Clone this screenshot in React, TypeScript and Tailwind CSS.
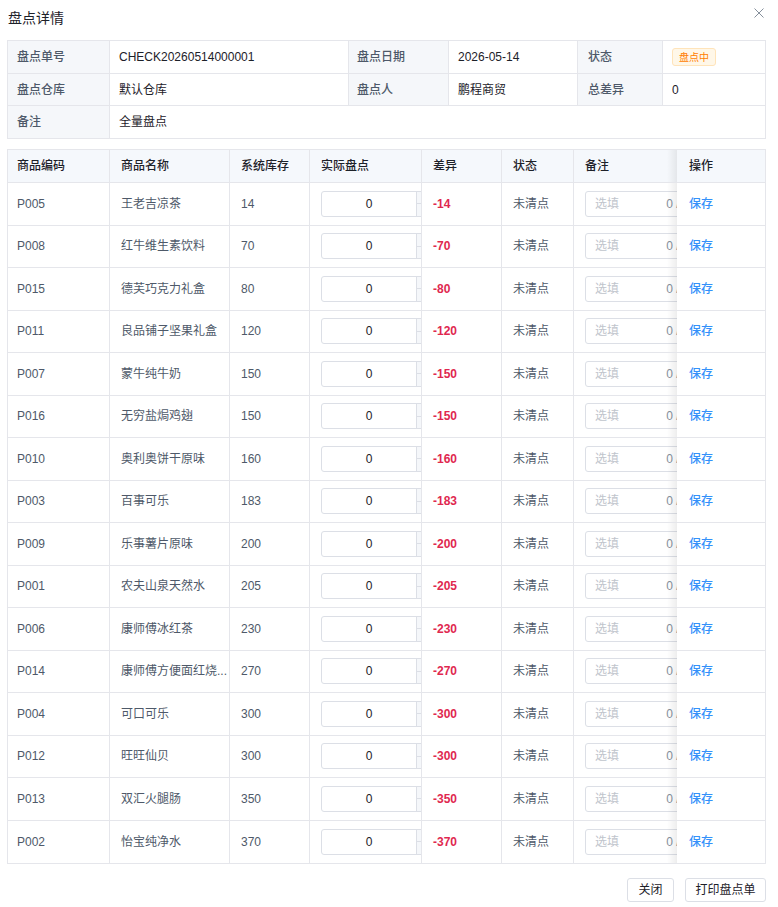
import React from "react";

const rows: [string, string, number][] = [
  ["P005", "王老吉凉茶", 14],
  ["P008", "红牛维生素饮料", 70],
  ["P015", "德芙巧克力礼盒", 80],
  ["P011", "良品铺子坚果礼盒", 120],
  ["P007", "蒙牛纯牛奶", 150],
  ["P016", "无穷盐焗鸡翅", 150],
  ["P010", "奥利奥饼干原味", 160],
  ["P003", "百事可乐", 183],
  ["P009", "乐事薯片原味", 200],
  ["P001", "农夫山泉天然水", 205],
  ["P006", "康师傅冰红茶", 230],
  ["P014", "康师傅方便面红烧...", 270],
  ["P004", "可口可乐", 300],
  ["P012", "旺旺仙贝", 300],
  ["P013", "双汇火腿肠", 350],
  ["P002", "怡宝纯净水", 370],
];

const grid =
  "grid grid-cols-[102px_120px_80px_112px_80px_72px_103px_88px]";

function ActionCell({ children, header }: { children: React.ReactNode; header?: boolean }) {
  return (
    <div
      className={`relative z-10 flex items-center pl-[12px] ${header ? "bg-[#f5f8fc] font-medium text-[#1d2129]" : "bg-white"}`}
    >
      <div className="pointer-events-none absolute left-[-10px] top-0 h-full w-[10px] bg-gradient-to-r from-transparent to-[rgba(0,0,0,0.07)]" />
      {children}
    </div>
  );
}

export default function App() {
  return (
    <div
      className="w-[778px] min-h-[907px] bg-white text-[12px] text-[#4e5969]"
      style={{ fontFamily: '"Liberation Sans", "Noto Sans CJK SC", sans-serif' }}
    >
      <div className="relative flex h-[36px] items-center pl-[8px] text-[14px] text-[#1d2129]">
        盘点详情
        <svg
          className="absolute left-[754px] top-[8px]"
          width="10"
          height="10"
          viewBox="0 0 10 10"
        >
          <path d="M0.5 0.5L9.5 9.5M9.5 0.5L0.5 9.5" stroke="#86909c" strokeWidth="1" />
        </svg>
      </div>

      {/* descriptions */}
      <div className="ml-[7px] mt-[4px] w-[759px] border border-[#e5e6eb]">
        <div className="grid h-[33px] grid-cols-[102px_239px_100px_129px_85px_102px] border-b border-[#e5e6eb]">
          <div className="flex items-center border-r border-[#e5e6eb] bg-[#f5f7fa] pl-[9px] font-medium">盘点单号</div>
          <div className="flex items-center border-r border-[#e5e6eb] pl-[9px] text-[#1d2129]">CHECK20260514000001</div>
          <div className="flex items-center border-r border-[#e5e6eb] bg-[#f5f7fa] pl-[8px] font-medium">盘点日期</div>
          <div className="flex items-center border-r border-[#e5e6eb] pl-[9px] text-[#1d2129]">2026-05-14</div>
          <div className="flex items-center border-r border-[#e5e6eb] bg-[#f5f7fa] pl-[10px] font-medium">状态</div>
          <div className="flex items-center pl-[9px]">
            <span className="flex h-[18px] w-[44px] items-center justify-center rounded-[3px] border border-[#ffe4ba] bg-[#fff7e8] text-[10px] text-[#ff7d00]">
              盘点中
            </span>
          </div>
        </div>
        <div className="grid h-[32px] grid-cols-[102px_239px_100px_129px_85px_102px] border-b border-[#e5e6eb]">
          <div className="flex items-center border-r border-[#e5e6eb] bg-[#f5f7fa] pl-[9px] font-medium">盘点仓库</div>
          <div className="flex items-center border-r border-[#e5e6eb] pl-[9px] text-[#1d2129]">默认仓库</div>
          <div className="flex items-center border-r border-[#e5e6eb] bg-[#f5f7fa] pl-[8px] font-medium">盘点人</div>
          <div className="flex items-center border-r border-[#e5e6eb] pl-[9px] text-[#1d2129]">鹏程商贸</div>
          <div className="flex items-center border-r border-[#e5e6eb] bg-[#f5f7fa] pl-[10px] font-medium">总差异</div>
          <div className="flex items-center pl-[9px] text-[#1d2129]">0</div>
        </div>
        <div className="grid h-[32px] grid-cols-[102px_655px]">
          <div className="flex items-center border-r border-[#e5e6eb] bg-[#f5f7fa] pl-[9px] font-medium">备注</div>
          <div className="flex items-center pl-[9px] text-[#1d2129]">全量盘点</div>
        </div>
      </div>

      {/* table */}
      <div className="ml-[7px] mt-[10px] w-[759px] border border-[#e5e6eb]">
        <div className={`${grid} h-[33px] border-b border-[#e5e6eb] bg-[#f5f8fc] font-medium text-[#1d2129]`}>
          <div className="flex items-center border-r border-[#e5e6eb] pl-[9px]">商品编码</div>
          <div className="flex items-center border-r border-[#e5e6eb] pl-[11px]">商品名称</div>
          <div className="flex items-center border-r border-[#e5e6eb] pl-[11px]">系统库存</div>
          <div className="flex items-center border-r border-[#e5e6eb] pl-[11px]">实际盘点</div>
          <div className="flex items-center border-r border-[#e5e6eb] pl-[11px]">差异</div>
          <div className="flex items-center border-r border-[#e5e6eb] pl-[11px]">状态</div>
          <div className="flex items-center pl-[11px]">备注</div>
          <ActionCell header>操作</ActionCell>
        </div>
        {rows.map(([code, name, qty], i) => (
          <div
            key={code}
            className={`${grid} h-[42.5px] ${i < rows.length - 1 ? "border-b border-[#e5e6eb]" : ""}`}
          >
            <div className="flex items-center border-r border-[#e5e6eb] pl-[9px]">{code}</div>
            <div className="flex min-w-0 items-center overflow-hidden whitespace-nowrap border-r border-[#e5e6eb] pl-[11px]">
              {name}
            </div>
            <div className="flex items-center border-r border-[#e5e6eb] pl-[11px]">{qty}</div>
            <div className="flex items-center overflow-hidden border-r border-[#e5e6eb] pl-[11px]">
              <div className="flex h-[26px] w-[118px] shrink-0 rounded-[3px] border border-[#dcdfe6] bg-white">
                <div className="flex flex-1 items-center justify-center text-[#1d2129]">0</div>
                <div className="flex w-[22px] flex-col border-l border-[#dcdfe6] bg-[#f5f7fa]">
                  <div className="flex-1 border-b border-[#dcdfe6]" />
                  <div className="flex-1" />
                </div>
              </div>
            </div>
            <div className="flex items-center border-r border-[#e5e6eb] pl-[11px] font-bold text-[#e0284f]">
              -{qty}
            </div>
            <div className="flex items-center border-r border-[#e5e6eb] pl-[11px]">未清点</div>
            <div className="flex items-center pl-[11px]">
              <div className="flex h-[26px] w-[127px] shrink-0 items-center justify-between rounded-[3px] border border-[#dcdfe6] bg-white pl-[9px] pr-[8px]">
                <span className="text-[#c0c4cc]">选填</span>
                <span className="text-[#86909c]">0 / 200</span>
              </div>
            </div>
            <ActionCell>
              <span className="font-medium text-[#3491fa]">保存</span>
            </ActionCell>
          </div>
        ))}
      </div>

      {/* footer */}
      <div className="mt-[14px] flex w-[766px] justify-end gap-[11px]">
        <button className="flex h-[24px] w-[47px] items-center justify-center rounded-[3px] border border-[#dcdfe6] bg-white text-[12px] text-[#1d2129]">
          关闭
        </button>
        <button className="flex h-[24px] w-[81px] items-center justify-center rounded-[3px] border border-[#dcdfe6] bg-white text-[12px] text-[#1d2129]">
          打印盘点单
        </button>
      </div>
    </div>
  );
}
